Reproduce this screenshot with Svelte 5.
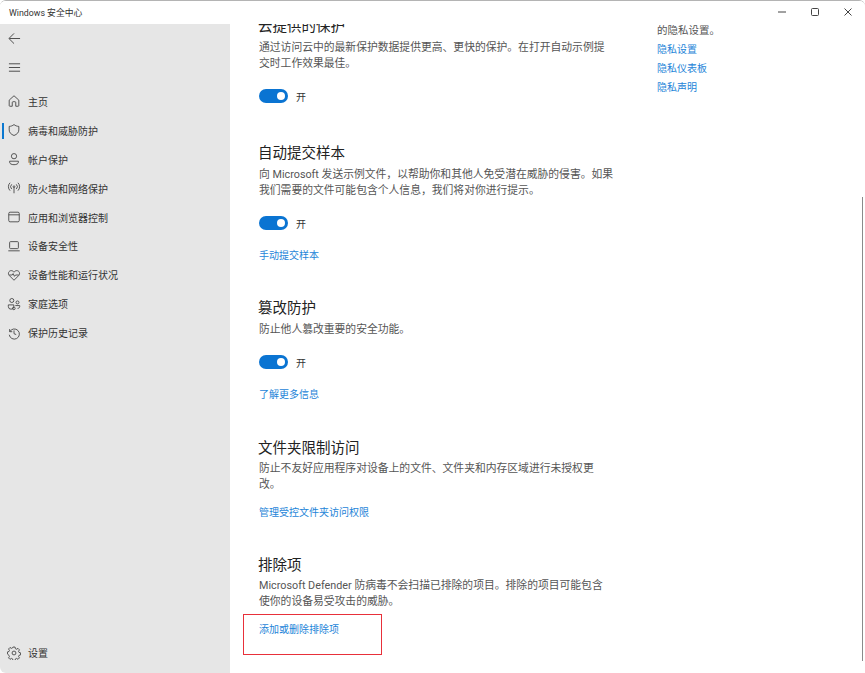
<script>
	const nav = [
		{ label: '主页', icon: 'home' },
		{ label: '病毒和威胁防护', icon: 'shield', active: true },
		{ label: '帐户保护', icon: 'person' },
		{ label: '防火墙和网络保护', icon: 'wifi' },
		{ label: '应用和浏览器控制', icon: 'app' },
		{ label: '设备安全性', icon: 'laptop' },
		{ label: '设备性能和运行状况', icon: 'heart' },
		{ label: '家庭选项', icon: 'family' },
		{ label: '保护历史记录', icon: 'history' }
	];

	const sections = [
		{
			title: '云提供的保护',
			text: ['通过访问云中的最新保护数据提供更高、更快的保护。在打开自动示例提', '交时工作效果最佳。'],
			toggle: true
		},
		{
			title: '自动提交样本',
			text: ['向 Microsoft 发送示例文件，以帮助你和其他人免受潜在威胁的侵害。如果', '我们需要的文件可能包含个人信息，我们将对你进行提示。'],
			toggle: true,
			link: '手动提交样本'
		},
		{
			title: '篡改防护',
			text: ['防止他人篡改重要的安全功能。'],
			toggle: true,
			link: '了解更多信息'
		},
		{
			title: '文件夹限制访问',
			text: ['防止不友好应用程序对设备上的文件、文件夹和内存区域进行未授权更', '改。'],
			link: '管理受控文件夹访问权限'
		},
		{
			title: '排除项',
			text: ['Microsoft Defender 防病毒不会扫描已排除的项目。排除的项目可能包含', '使你的设备易受攻击的威胁。'],
			link: '添加或删除排除项',
			marked: true
		}
	];

	const privacy = ['隐私设置', '隐私仪表板', '隐私声明'];
</script>

{#snippet icon(name)}
	<svg class="icon" viewBox="0 0 16 16" fill="none" stroke="currentColor" stroke-width="1">
		{#if name === 'home'}
			<path d="M2.5 7 8 2l5.5 5v6.2a.8.8 0 0 1-.8.8H10V9.8a1 1 0 0 0-1-1H7a1 1 0 0 0-1 1V14H3.3a.8.8 0 0 1-.8-.8z" />
		{:else if name === 'shield'}
			<path d="M8 1.8c1.6 1.3 3.4 2 5.5 2.1v4c0 3-2 5-5.5 6.4C4.500 12.900 2.500 10.900 2.500 7.900v-4C4.600 3.800 6.400 3.100 8 1.800z" />
		{:else if name === 'person'}
			<circle cx="8" cy="4.800" r="3" />
			<path d="M3 10.500h10v1.300c0 1.500-2 2.700-5 2.700s-5-1.200-5-2.700z" />
		{:else if name === 'wifi'}
			<circle cx="8" cy="6.500" r="1" />
			<path d="M8 7.500V14M5.400 9.200a3.700 3.700 0 0 1 0-5.400M10.600 3.800a3.700 3.700 0 0 1 0 5.400M3.500 11a6.300 6.300 0 0 1 0-9M12.500 2a6.300 6.300 0 0 1 0 9" />
		{:else if name === 'app'}
			<rect x="2" y="2.500" width="12" height="11" rx="1.500" />
			<path d="M2 5.500h12" />
		{:else if name === 'laptop'}
			<rect x="3" y="3" width="10" height="8" rx="1" />
			<path d="M1.500 13.500h13" />
		{:else if name === 'heart'}
			<path d="M8 14 2.600 8.600C.6 6.400 2 3 4.800 3 6.200 3 7.300 3.800 8 4.800 8.700 3.800 9.800 3 11.200 3 14 3 15.400 6.400 13.400 8.600z" />
			<path d="M2.500 8H6l1-1.600L8.500 9.500 9.800 8h3.700" />
		{:else if name === 'family'}
			<circle cx="5.500" cy="4" r="2.300" />
			<circle cx="12" cy="6.200" r="1.700" />
			<path d="M1.500 9h6.300v1.800a3.100 3.100 0 0 1-6.300 0zM9.500 9.800H14.500v1.200c0 1.200-1 2-2.400 2" />
			<circle cx="7.800" cy="13" r="1.500" />
		{:else if name === 'history'}
			<path d="M3 3.500v3h3M3.200 6.500A5.800 5.800 0 1 1 2.600 10" />
			<path d="M8 5v3.800l2.500 1" />
		{:else if name === 'gear'}
			<path d="M6.800 1.500h2.400l.4 1.900 1.300.6 1.700-1 1.600 1.700-1 1.700.5 1.200 1.800.5v2.400l-1.800.5-.5 1.200 1 1.700-1.600 1.600-1.700-1-1.300.6-.4 1.800H6.800l-.4-1.800-1.300-.6-1.700 1-1.600-1.600 1-1.700-.5-1.200L.5 9.500V7.100l1.800-.5.500-1.200-1-1.700 1.600-1.700 1.700 1 1.300-.6z" transform="translate(0 -.3)" />
			<circle cx="8" cy="8" r="2.200" />
		{/if}
	</svg>
{/snippet}

<div class="window">
	<header class="titlebar">
		<span class="app-title">Windows 安全中心</span>
		<div class="controls">
			<svg viewBox="0 0 10 10" class="ctl"><path d="M1 5h8" /></svg>
			<svg viewBox="0 0 10 10" class="ctl"><rect x="1.500" y="1.500" width="7" height="7" rx="1" /></svg>
			<svg viewBox="0 0 10 10" class="ctl"><path d="M1.500 1.500l7 7M8.500 1.500l-7 7" /></svg>
		</div>
	</header>

	<div class="body">
		<aside class="sidebar">
			<button class="tool" aria-label="返回">
				<svg viewBox="0 0 14 14" class="tool-icon"><path d="M13 7H1.500M6.500 1.500 1 7l5.500 5.500" /></svg>
			</button>
			<button class="tool" aria-label="菜单">
				<svg viewBox="0 0 14 14" class="tool-icon"><path d="M1 3h12M1 7h12M1 11h12" /></svg>
			</button>
			<nav class="nav">
				{#each nav as item}
					<div class="nav-item" class:active={item.active}>
						{@render icon(item.icon)}
						<span>{item.label}</span>
					</div>
				{/each}
			</nav>
			<div class="nav-item settings">
				{@render icon('gear')}
				<span>设置</span>
			</div>
		</aside>

		<main class="content">
			<div class="column">
				{#each sections as s}
					<section class="section" class:no-link={!s.link}>
						<h2>{s.title}</h2>
						<p>
							{#each s.text as line}<span class="line">{line}</span>{/each}
						</p>
						{#if s.toggle}
							<div class="toggle-row">
								<span class="toggle"><span class="knob"></span></span>
								<span>开</span>
							</div>
						{/if}
						{#if s.link}
							<div class="link-row">
								<a href="#top" class="link">{s.link}</a>
								{#if s.marked}<span class="marker"></span>{/if}
							</div>
						{/if}
					</section>
				{/each}
			</div>
			<div class="side-col">
				<p class="side-text">的隐私设置。</p>
				{#each privacy as p}
					<a href="#top" class="link side-link">{p}</a>
				{/each}
			</div>
			<div class="scrollbar"></div>
		</main>
	</div>
</div>

<style>
	:global(body) {
		margin: 0;
		background: #fff;
	}

	.window {
		width: 865px;
		height: 673px;
		display: flex;
		flex-direction: column;
		overflow: hidden;
		background: #fff;
		border-top: 1px solid #b4b4b4;
		border-radius: 6px;
		box-sizing: border-box;
		font-family: Roboto, "Noto Sans CJK SC", sans-serif;
		color: #3c3c3c;
	}

	.titlebar {
		height: 23px;
		flex: none;
		display: flex;
		align-items: center;
		justify-content: space-between;
		position: relative;
		z-index: 1;
		background: #fff;
	}

	.app-title {
		margin-left: 9px;
		font-size: 8.800px;
		color: #333;
	}

	.controls {
		display: flex;
		gap: 23px;
		margin-right: 12px;
		margin-bottom: 1px;
	}

	.ctl {
		width: 10px;
		height: 10px;
		fill: none;
		stroke: #444;
		stroke-width: 1;
	}

	.body {
		flex: 1;
		display: flex;
		min-height: 0;
	}

	.sidebar {
		width: 230px;
		flex: none;
		background: #e6e6e6;
		display: flex;
		flex-direction: column;
	}

	.tool {
		height: 29px;
		width: 28px;
		padding: 0;
		border: 0;
		background: none;
		display: flex;
		align-items: center;
		justify-content: center;
	}

	.tool-icon {
		width: 13px;
		height: 13px;
		fill: none;
		stroke: #444;
		stroke-width: 1;
	}

	.nav {
		margin-top: 5px;
		flex: 1;
	}

	.nav-item {
		height: 28.900px;
		display: flex;
		align-items: center;
		gap: 7px;
		padding-left: 7px;
		font-size: 10px;
		color: #333;
		position: relative;
	}

	.nav-item.active::before {
		content: "";
		position: absolute;
		left: 2px;
		top: 7px;
		width: 2px;
		height: 16px;
		background: #0b78d0;
	}

	.settings {
		margin-bottom: 6px;
	}

	.icon {
		width: 14px;
		height: 14px;
		flex: none;
		color: #444;
	}

	.content {
		flex: 1;
		display: flex;
		overflow: hidden;
		position: relative;
		min-width: 0;
	}

	.column {
		width: 358px;
		margin-left: 29px;
		margin-top: -10px;
		flex: none;
	}

	.section {
		padding-bottom: 33.300px;
	}

	.section.no-link {
		padding-bottom: 38px;
	}

	h2 {
		margin: 0;
		font-size: 14.500px;
		line-height: 25px;
		font-weight: 400;
		color: #222;
		margin-left: -1px;
		white-space: nowrap;
	}

	p {
		margin: 0;
		font-size: 10.800px;
		line-height: 16px;
		color: #555;
		white-space: nowrap;
	}

	.section p {
		margin-top: 0.500px;
	}

	.line {
		display: block;
	}

	.toggle-row {
		margin-top: 17.500px;
		height: 14px;
		display: flex;
		align-items: center;
		gap: 8px;
		font-size: 10px;
		color: #333;
	}

	.toggle {
		width: 29px;
		height: 14px;
		border-radius: 7px;
		background: #0a74d2;
		display: flex;
		align-items: center;
		justify-content: flex-end;
		padding-right: 3px;
		box-sizing: border-box;
	}

	.knob {
		width: 8px;
		height: 8px;
		border-radius: 50%;
		background: #fff;
	}

	.link-row {
		margin-top: 12.500px;
		position: relative;
	}

	.toggle-row + .link-row {
		margin-top: 19px;
	}

	.link {
		font-size: 10px;
		line-height: 14px;
		color: #1d84d8;
		text-decoration: none;
		display: block;
		white-space: nowrap;
	}

	.marker {
		position: absolute;
		left: -16px;
		top: -8.500px;
		width: 139px;
		height: 41px;
		border: 1.500px solid #e8303a;
		box-sizing: border-box;
	}

	.side-col {
		margin-left: 40px;
		margin-top: 0;
		display: flex;
		flex-direction: column;
		gap: 5px;
	}

	.side-text {
		line-height: 14px;
		font-size: 10.500px;
	}

	.scrollbar {
		position: absolute;
		right: 2px;
		top: 173px;
		width: 1px;
		height: 464px;
		background: #8a8a8a;
	}
</style>
